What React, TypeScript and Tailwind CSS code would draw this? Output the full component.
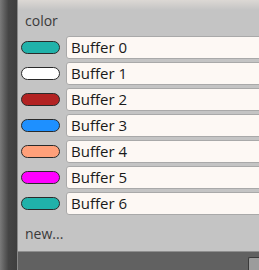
import React from 'react';

const buffers = [
  { name: 'Buffer 0', color: 'bg-[#20b2aa]' },
  { name: 'Buffer 1', color: 'bg-white' },
  { name: 'Buffer 2', color: 'bg-[#b22222]' },
  { name: 'Buffer 3', color: 'bg-[#1e90ff]' },
  { name: 'Buffer 4', color: 'bg-[#ffa07a]' },
  { name: 'Buffer 5', color: 'bg-[#ff00ff]' },
  { name: 'Buffer 6', color: 'bg-[#20b2aa]' },
];

export default function App() {
  return (
    <div className="w-[259px] h-[270px] overflow-hidden flex font-['Open_Sans',sans-serif] bg-[#c4c4c4]">
      {/* left scroller strip */}
      <div className="w-[18px] shrink-0 bg-gradient-to-r from-[#7a7a7a] via-[#454545] to-[#3e3e3e] border-r border-[#8a8a8a]" />

      <div className="flex-1 flex flex-col min-w-0">
        <div className="flex-1 flex flex-col bg-gradient-to-b from-[#dcd8d4] to-[#c4c4c4] to-[4%]">
          <div className="pl-[7px] pt-[11px] h-[36px] text-[14px] text-[#3a3a3a] leading-[20px]">color</div>

          <div className="flex flex-col gap-[3px]">
            {buffers.map((b) => (
              <div key={b.name} className="flex items-center h-[23px]">
                <div className={`ml-[3px] w-[39px] h-[13px] rounded-full border border-[#2a2a2a] ${b.color}`} />
                <div className="ml-[6px] flex-1 h-[23px] -mr-2 bg-[#fdf8f4] border border-[#a9a9a9] rounded-l-[3px] pl-[4px] text-[15px] leading-[21px] text-[#1a1a1a]">
                  {b.name}
                </div>
              </div>
            ))}
          </div>

          <div className="pl-[7px] pt-[9px] text-[14px] text-[#3a3a3a] leading-[20px]">new...</div>
        </div>

        <div className="h-[19px] shrink-0 bg-[#616161] border-t border-[#8e8e8e] flex justify-end items-end">
          <div className="w-[11px] h-[13px] bg-[#9c9c9c] border border-[#3a3a3a] border-r-0 border-b-0 rounded-tl-[2px]" />
        </div>
      </div>
    </div>
  );
}
